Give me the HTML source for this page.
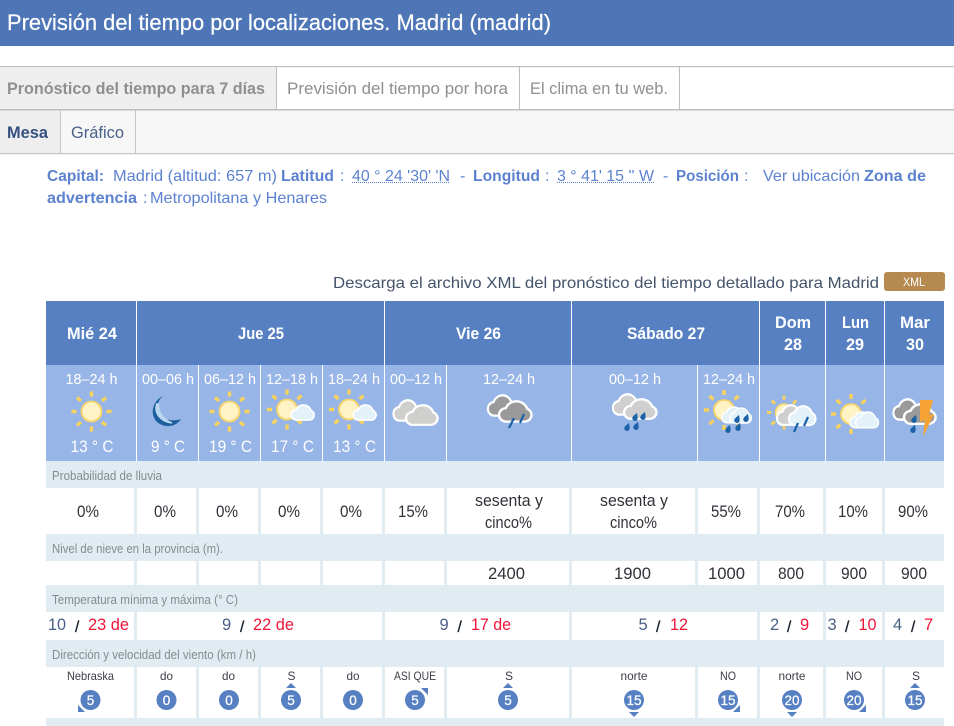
<!DOCTYPE html>
<html lang="es">
<head>
<meta charset="utf-8">
<title>Previsión del tiempo por localizaciones. Madrid (madrid)</title>
<style>
html,body{margin:0;padding:0;background:#fff;width:954px;height:726px;overflow:hidden}
svg{display:block;font-family:"Liberation Sans",Arial,sans-serif}
.t{font-size:16px;fill:#5c82cf}
.b{font-weight:bold}
.h{font-size:17px;fill:#fff;font-weight:bold;stroke:none}
.s{font-size:15px;fill:#fff}
.c{font-size:17px;fill:#fff}
.l{font-size:12.5px;fill:#858b8e}
.v{font-size:16.5px;fill:#2f3237}
.v2{font-size:15.5px;fill:#2f3237}
.n{font-size:16.5px;fill:#4a5f85}
.r{font-size:16.5px;fill:#f0143a}
.sl{font-size:15.5px;fill:#1c2430;stroke:#1c2430;stroke-width:.35}
.w{font-size:12px;fill:#3b3f45}
.k{font-size:13.5px;fill:#fff;stroke:#fff;stroke-width:.25;text-anchor:middle}
.ci{fill:#5680c2}
.ar{fill:#5680c2}
</style>
</head>
<body>
<svg xmlns="http://www.w3.org/2000/svg" width="954" height="726" viewBox="0 0 954 726">
<defs>
<g id="sun">
<g stroke="#f8d25f" stroke-width="3.4">
<path d="M0-20V-15M0 15V20M-20 0H-15M15 0H20M-14.5-14L-10.5-10.5M14.5-14L10.5-10.5M-14.5 14L-10.5 10.5M14.5 14L10.5 10.5"/>
</g>
<circle r="10" fill="#fff2c4" stroke="#f6d469" stroke-width="1.8"/>
</g>
<path id="cl" d="M6 16H19A5 5 0 0 0 20.5 6.4A8 8 0 0 0 5.5 6A5 5 0 0 0 6 16Z"/>
<path id="dr" d="M0-5.5C1.5-3 3-1 2.6 1.2A2.7 2.7 0 0 1-2.6 .4C-2.6-1.5-.8-3.5 0-5.5Z" fill="#1c62a8" transform="rotate(20)"/>
</defs>

<!-- title bar -->
<rect width="954" height="46" fill="#4e76b6"/>
<text x="7" y="30" font-size="22" fill="#fff" stroke="#fff" stroke-width=".2" textLength="544" lengthAdjust="spacingAndGlyphs">Previsión del tiempo por localizaciones. Madrid (madrid)</text>

<!-- tabs -->
<rect y="66" width="954" height="1.2" fill="#bdbdbd"/>
<rect y="67" width="276" height="42" fill="#eee"/>
<rect x="276" y="67" width="1" height="42" fill="#bdbdbd"/>
<rect x="519" y="67" width="1" height="42" fill="#bdbdbd"/>
<rect x="679" y="67" width="1" height="42" fill="#bdbdbd"/>
<rect y="109" width="954" height="1.6" fill="#bdbdbd"/>
<text x="7" y="94" font-size="17" font-weight="bold" fill="#8f8f8f" textLength="258" lengthAdjust="spacingAndGlyphs">Pronóstico del tiempo para 7 días</text>
<text x="287" y="94" font-size="17" fill="#8f8f8f" textLength="221" lengthAdjust="spacingAndGlyphs">Previsión del tiempo por hora</text>
<text x="530" y="94" font-size="17" fill="#8f8f8f" textLength="138" lengthAdjust="spacingAndGlyphs">El clima en tu web.</text>

<rect y="110.5" width="954" height="42.5" fill="#f7f7f7"/>
<rect y="110.5" width="60" height="42.5" fill="#eee"/>
<rect x="60" y="110.5" width="1" height="42.5" fill="#c4c4c4"/>
<rect x="135" y="110.5" width="1" height="42.5" fill="#c4c4c4"/>
<rect y="153" width="954" height="1.2" fill="#c4c4c4"/>
<text x="7" y="138" font-size="17" font-weight="bold" fill="#34507f" textLength="41" lengthAdjust="spacingAndGlyphs">Mesa</text>
<text x="71" y="138" font-size="17" fill="#4a628a" textLength="53" lengthAdjust="spacingAndGlyphs">Gráfico</text>

<!-- info -->
<text class="t b" x="47" y="181" textLength="57" lengthAdjust="spacingAndGlyphs">Capital:</text>
<text class="t" x="113" y="181" textLength="164" lengthAdjust="spacingAndGlyphs">Madrid (altitud: 657 m)</text>
<text class="t b" x="281" y="181" textLength="53" lengthAdjust="spacingAndGlyphs">Latitud</text>
<text class="t" x="340" y="181">:</text>
<text class="t" x="352" y="181" textLength="98" lengthAdjust="spacingAndGlyphs">40 ° 24 '30' 'N</text>
<path d="M352 182.5H450" stroke="#5c82cf" stroke-dasharray="1 1" fill="none"/>
<text class="t" x="460" y="181">-</text>
<text class="t b" x="473" y="181" textLength="67" lengthAdjust="spacingAndGlyphs">Longitud</text>
<text class="t" x="545" y="181">:</text>
<text class="t" x="557" y="181" textLength="97" lengthAdjust="spacingAndGlyphs">3 ° 41' 15 '' W</text>
<path d="M557 182.5H654" stroke="#5c82cf" stroke-dasharray="1 1" fill="none"/>
<text class="t" x="663" y="181">-</text>
<text class="t b" x="676" y="181" textLength="63" lengthAdjust="spacingAndGlyphs">Posición</text>
<text class="t" x="744" y="181">:</text>
<text class="t" x="763" y="181" textLength="97" lengthAdjust="spacingAndGlyphs">Ver ubicación</text>
<text class="t b" x="864" y="181" textLength="62" lengthAdjust="spacingAndGlyphs">Zona de</text>
<text class="t b" x="47" y="203" textLength="90" lengthAdjust="spacingAndGlyphs">advertencia</text>
<text class="t" x="143" y="203">:</text>
<text class="t" x="150" y="203" textLength="177" lengthAdjust="spacingAndGlyphs">Metropolitana y Henares</text>

<!-- xml -->
<text x="333" y="288" font-size="16" fill="#44546a" textLength="546" lengthAdjust="spacingAndGlyphs">Descarga el archivo XML del pronóstico del tiempo detallado para Madrid</text>
<rect x="884" y="272" width="61" height="19" rx="3" fill="#b5894f"/>
<text x="903" y="286" font-size="12" fill="#fff" textLength="22" lengthAdjust="spacingAndGlyphs">XML</text>

<!-- table backgrounds -->
<rect x="46" y="301" width="898" height="64" fill="#5680c2"/>
<rect x="46" y="365" width="898" height="96" fill="#97b5e6"/>
<rect x="46" y="461" width="898" height="265" fill="#e1ecf2"/>
<g fill="#fff">
<rect x="136" y="301" width="1" height="160"/><rect x="384" y="301" width="1" height="160"/><rect x="571" y="301" width="1" height="160"/><rect x="759" y="301" width="1" height="160"/><rect x="825" y="301" width="1" height="160"/><rect x="884" y="301" width="1" height="160"/>
<rect x="198" y="365" width="1" height="96"/><rect x="260" y="365" width="1" height="96"/><rect x="322" y="365" width="1" height="96"/><rect x="446" y="365" width="1" height="96"/><rect x="697" y="365" width="1" height="96"/>
<!-- rain row -->
<rect x="46" y="488" width="88" height="46"/><rect x="137" y="488" width="59" height="46"/><rect x="199" y="488" width="59" height="46"/><rect x="261" y="488" width="59" height="46"/><rect x="323" y="488" width="59" height="46"/><rect x="385" y="488" width="59" height="46"/><rect x="447" y="488" width="122" height="46"/><rect x="572" y="488" width="123" height="46"/><rect x="698" y="488" width="59" height="46"/><rect x="760" y="488" width="63" height="46"/><rect x="826" y="488" width="56" height="46"/><rect x="885" y="488" width="59" height="46"/>
<!-- snow row -->
<rect x="46" y="561" width="88" height="24"/><rect x="137" y="561" width="59" height="24"/><rect x="199" y="561" width="59" height="24"/><rect x="261" y="561" width="59" height="24"/><rect x="323" y="561" width="59" height="24"/><rect x="385" y="561" width="59" height="24"/><rect x="447" y="561" width="122" height="24"/><rect x="572" y="561" width="123" height="24"/><rect x="698" y="561" width="59" height="24"/><rect x="760" y="561" width="63" height="24"/><rect x="826" y="561" width="56" height="24"/><rect x="885" y="561" width="59" height="24"/>
<!-- temp row -->
<rect x="46" y="612" width="88" height="28"/><rect x="137" y="612" width="245" height="28"/><rect x="385" y="612" width="184" height="28"/><rect x="572" y="612" width="185" height="28"/><rect x="760" y="612" width="63" height="28"/><rect x="826" y="612" width="56" height="28"/><rect x="885" y="612" width="59" height="28"/>
<!-- wind row -->
<rect x="46" y="667" width="88" height="51"/><rect x="137" y="667" width="59" height="51"/><rect x="199" y="667" width="59" height="51"/><rect x="261" y="667" width="59" height="51"/><rect x="323" y="667" width="59" height="51"/><rect x="385" y="667" width="59" height="51"/><rect x="447" y="667" width="122" height="51"/><rect x="572" y="667" width="123" height="51"/><rect x="698" y="667" width="59" height="51"/><rect x="760" y="667" width="63" height="51"/><rect x="826" y="667" width="56" height="51"/><rect x="885" y="667" width="59" height="51"/>
</g>

<!-- header -->
<text class="h" x="67" y="339" textLength="50" lengthAdjust="spacingAndGlyphs">Mié 24</text>
<text class="h" x="238" y="339" textLength="46" lengthAdjust="spacingAndGlyphs">Jue 25</text>
<text class="h" x="456" y="339" textLength="45" lengthAdjust="spacingAndGlyphs">Vie 26</text>
<text class="h" x="627" y="339" textLength="78" lengthAdjust="spacingAndGlyphs">Sábado 27</text>
<text class="h" x="775" y="328" textLength="36" lengthAdjust="spacingAndGlyphs">Dom</text>
<text class="h" x="784" y="350" textLength="18" lengthAdjust="spacingAndGlyphs">28</text>
<text class="h" x="842" y="328" textLength="27" lengthAdjust="spacingAndGlyphs">Lun</text>
<text class="h" x="846" y="350" textLength="18" lengthAdjust="spacingAndGlyphs">29</text>
<text class="h" x="900" y="328" textLength="30" lengthAdjust="spacingAndGlyphs">Mar</text>
<text class="h" x="906" y="350" textLength="18" lengthAdjust="spacingAndGlyphs">30</text>

<!-- time labels -->
<text class="s" x="65.5" y="384" textLength="52" lengthAdjust="spacingAndGlyphs">18–24 h</text>
<text class="s" x="142" y="384" textLength="52" lengthAdjust="spacingAndGlyphs">00–06 h</text>
<text class="s" x="204" y="384" textLength="52" lengthAdjust="spacingAndGlyphs">06–12 h</text>
<text class="s" x="266" y="384" textLength="52" lengthAdjust="spacingAndGlyphs">12–18 h</text>
<text class="s" x="328" y="384" textLength="52" lengthAdjust="spacingAndGlyphs">18–24 h</text>
<text class="s" x="390" y="384" textLength="52" lengthAdjust="spacingAndGlyphs">00–12 h</text>
<text class="s" x="483" y="384" textLength="52" lengthAdjust="spacingAndGlyphs">12–24 h</text>
<text class="s" x="609" y="384" textLength="52" lengthAdjust="spacingAndGlyphs">00–12 h</text>
<text class="s" x="703" y="384" textLength="52" lengthAdjust="spacingAndGlyphs">12–24 h</text>

<!-- temps -->
<text class="c" x="70.5" y="452" textLength="43" lengthAdjust="spacingAndGlyphs">13 ° C</text>
<text class="c" x="151" y="452" textLength="34" lengthAdjust="spacingAndGlyphs">9 ° C</text>
<text class="c" x="209" y="452" textLength="43" lengthAdjust="spacingAndGlyphs">19 ° C</text>
<text class="c" x="271" y="452" textLength="43" lengthAdjust="spacingAndGlyphs">17 ° C</text>
<text class="c" x="333" y="452" textLength="43" lengthAdjust="spacingAndGlyphs">13 ° C</text>

<!-- icons -->
<use href="#sun" x="91.5" y="411.5"/>
<path d="M163 396C150 402 149 420 162 425C170 428 177 425 181 419C170 423 160 418 158 409C157 404 159 399 163 396Z" fill="#1d5f9f"/>
<path d="M156.5 404C154 413 160 421.5 172 423C163 419 158.5 413 158.5 404Z" fill="#b9d8f0" stroke="#b9d8f0" stroke-width="1.4"/>
<use href="#sun" x="229.5" y="411.5"/>
<use href="#sun" x="287" y="409.5"/>
<use href="#cl" transform="translate(290.5 404) scale(1 1)" fill="#e3f1f8" stroke="#fff" stroke-width="1.8"/>
<use href="#sun" x="349" y="409.5"/>
<use href="#cl" transform="translate(352.5 404) scale(1 1)" fill="#e3f1f8" stroke="#fff" stroke-width="1.8"/>

<use href="#cl" transform="translate(392.5 399) scale(1.18 1.35)" fill="#cfcfcd" stroke="#fff" stroke-width="1.7"/>
<use href="#cl" transform="translate(405 404) scale(1.38 1.3)" fill="#cfcfcd" stroke="#fff" stroke-width="1.7"/>

<use href="#cl" transform="translate(487 394) scale(1.2 1.35)" fill="#9a9a9a" stroke="#fff" stroke-width="1.7"/>
<use href="#cl" transform="translate(498 400) scale(1.42 1.35)" fill="#9a9a9a" stroke="#fff" stroke-width="1.7"/>
<path d="M514 418L509 428M524 414L520 423" stroke="#1c62a8" stroke-width="2.2" fill="none"/>

<use href="#cl" transform="translate(612 393) scale(1.2 1.35)" fill="#cfcfcf" stroke="#fff" stroke-width="1.7"/>
<use href="#cl" transform="translate(623 398) scale(1.42 1.3)" fill="#cfcfcf" stroke="#fff" stroke-width="1.7"/>
<use href="#dr" x="635" y="418"/><use href="#dr" x="643" y="417"/><use href="#dr" x="627" y="428"/><use href="#dr" x="636" y="427"/>

<use href="#sun" x="724" y="410"/>
<use href="#cl" transform="translate(721 406) scale(1 1.05)" fill="#e3f1f8" stroke="#fff" stroke-width="1.4"/>
<use href="#cl" transform="translate(729 407) scale(.95 1)" fill="#e3f1f8" stroke="#fff" stroke-width="1.4"/>
<use href="#dr" x="737" y="420"/><use href="#dr" x="746" y="419"/><use href="#dr" x="728" y="430"/><use href="#dr" x="738" y="428"/>

<g transform="translate(784 412.5) scale(.85)"><use href="#sun"/></g>
<use href="#cl" transform="translate(776 404) scale(1.15 1.3)" fill="#cfcfcf" stroke="#fff" stroke-width="1.7"/>
<use href="#cl" transform="translate(788 405) scale(1.17 1.25)" fill="#e3f1f8" stroke="#fff" stroke-width="1.7"/>
<path d="M798 423L794 432M808 417L804 426" stroke="#1c62a8" stroke-width="2.2" fill="none"/>

<use href="#sun" x="851" y="414"/>
<use href="#cl" transform="translate(849 411) scale(1 1.05)" fill="#e3f1f8" stroke="#fff" stroke-width="1.4"/>
<use href="#cl" transform="translate(855 411) scale(1 1.05)" fill="#e3f1f8" stroke="#fff" stroke-width="1.4"/>

<use href="#cl" transform="translate(892.5 398) scale(1.16 1.35)" fill="#9a9a9a" stroke="#fff" stroke-width="1.8"/>
<use href="#cl" transform="translate(903 403) scale(1.38 1.3)" fill="#9a9a9a" stroke="#fff" stroke-width="1.8"/>
<use href="#dr" x="914" y="420"/><use href="#dr" x="913" y="430"/>
<path d="M920 400H933L929 415L934 414L923 437L925 420L920 422Z" fill="#f5a433"/>

<!-- labels -->
<text class="l" x="52" y="480" textLength="110" lengthAdjust="spacingAndGlyphs">Probabilidad de lluvia</text>
<text class="l" x="52" y="553" textLength="171" lengthAdjust="spacingAndGlyphs">Nivel de nieve en la provincia (m).</text>
<text class="l" x="52" y="604" textLength="186" lengthAdjust="spacingAndGlyphs">Temperatura mínima y máxima (° C)</text>
<text class="l" x="52" y="659" textLength="204" lengthAdjust="spacingAndGlyphs">Dirección y velocidad del viento (km / h)</text>

<!-- rain values -->
<text class="v" x="77" y="517" textLength="22" lengthAdjust="spacingAndGlyphs">0%</text>
<text class="v" x="154" y="517" textLength="22" lengthAdjust="spacingAndGlyphs">0%</text>
<text class="v" x="216" y="517" textLength="22" lengthAdjust="spacingAndGlyphs">0%</text>
<text class="v" x="278" y="517" textLength="22" lengthAdjust="spacingAndGlyphs">0%</text>
<text class="v" x="340" y="517" textLength="22" lengthAdjust="spacingAndGlyphs">0%</text>
<text class="v" x="398" y="517" textLength="30" lengthAdjust="spacingAndGlyphs">15%</text>
<text class="v" x="475" y="506" textLength="68" lengthAdjust="spacingAndGlyphs">sesenta y</text>
<text class="v" x="485" y="528" textLength="47" lengthAdjust="spacingAndGlyphs">cinco%</text>
<text class="v" x="600" y="506" textLength="68" lengthAdjust="spacingAndGlyphs">sesenta y</text>
<text class="v" x="610" y="528" textLength="47" lengthAdjust="spacingAndGlyphs">cinco%</text>
<text class="v" x="711" y="517" textLength="30" lengthAdjust="spacingAndGlyphs">55%</text>
<text class="v" x="775" y="517" textLength="30" lengthAdjust="spacingAndGlyphs">70%</text>
<text class="v" x="838" y="517" textLength="30" lengthAdjust="spacingAndGlyphs">10%</text>
<text class="v" x="898" y="517" textLength="30" lengthAdjust="spacingAndGlyphs">90%</text>

<!-- snow -->
<text class="v" x="488" y="579" textLength="37" lengthAdjust="spacingAndGlyphs">2400</text>
<text class="v" x="614" y="579" textLength="37" lengthAdjust="spacingAndGlyphs">1900</text>
<text class="v" x="708" y="579" textLength="37" lengthAdjust="spacingAndGlyphs">1000</text>
<text class="v" x="778" y="579" textLength="26" lengthAdjust="spacingAndGlyphs">800</text>
<text class="v" x="841" y="579" textLength="26" lengthAdjust="spacingAndGlyphs">900</text>
<text class="v" x="901" y="579" textLength="26" lengthAdjust="spacingAndGlyphs">900</text>

<!-- min/max -->
<text class="n" x="48" y="630" textLength="18" lengthAdjust="spacingAndGlyphs">10</text>
<text class="sl" x="75" y="632">/</text>
<text class="r" x="88" y="630" textLength="41" lengthAdjust="spacingAndGlyphs">23 de</text>
<text class="n" x="222" y="630">9</text>
<text class="sl" x="240" y="632">/</text>
<text class="r" x="253" y="630" textLength="41" lengthAdjust="spacingAndGlyphs">22 de</text>
<text class="n" x="439.5" y="630">9</text>
<text class="sl" x="457.5" y="632">/</text>
<text class="r" x="471" y="630" textLength="40" lengthAdjust="spacingAndGlyphs">17 de</text>
<text class="n" x="638.5" y="630">5</text>
<text class="sl" x="656" y="632">/</text>
<text class="r" x="670" y="630" textLength="18" lengthAdjust="spacingAndGlyphs">12</text>
<text class="n" x="770" y="630">2</text>
<text class="sl" x="787" y="632">/</text>
<text class="r" x="800" y="630">9</text>
<text class="n" x="827.5" y="630">3</text>
<text class="sl" x="845" y="632">/</text>
<text class="r" x="858.5" y="630" textLength="18" lengthAdjust="spacingAndGlyphs">10</text>
<text class="n" x="893" y="630">4</text>
<text class="sl" x="911" y="632">/</text>
<text class="r" x="924" y="630">7</text>

<!-- wind labels -->
<text class="w" x="67" y="680" textLength="47" lengthAdjust="spacingAndGlyphs">Nebraska</text>
<text class="w" x="160" y="680" textLength="13" lengthAdjust="spacingAndGlyphs">do</text>
<text class="w" x="222" y="680" textLength="13" lengthAdjust="spacingAndGlyphs">do</text>
<text class="w" x="287.5" y="680">S</text>
<text class="w" x="346.5" y="680" textLength="13" lengthAdjust="spacingAndGlyphs">do</text>
<text class="w" x="394" y="680" textLength="42" lengthAdjust="spacingAndGlyphs">ASI QUE</text>
<text class="w" x="505" y="680">S</text>
<text class="w" x="620.5" y="680" textLength="27" lengthAdjust="spacingAndGlyphs">norte</text>
<text class="w" x="720" y="680" textLength="16" lengthAdjust="spacingAndGlyphs">NO</text>
<text class="w" x="778.5" y="680" textLength="27" lengthAdjust="spacingAndGlyphs">norte</text>
<text class="w" x="846" y="680" textLength="16" lengthAdjust="spacingAndGlyphs">NO</text>
<text class="w" x="912" y="680">S</text>

<!-- wind circles -->
<circle class="ci" cx="90.5" cy="700" r="10"/><text class="k" x="90.5" y="705">5</text>
<circle class="ci" cx="166.5" cy="700" r="10"/><text class="k" x="166.5" y="705">0</text>
<circle class="ci" cx="229" cy="700" r="10"/><text class="k" x="229" y="705">0</text>
<circle class="ci" cx="291" cy="700" r="10"/><text class="k" x="291" y="705">5</text>
<circle class="ci" cx="353" cy="700" r="10"/><text class="k" x="353" y="705">0</text>
<circle class="ci" cx="415" cy="700" r="10"/><text class="k" x="415" y="705">5</text>
<circle class="ci" cx="508" cy="700" r="10"/><text class="k" x="508" y="705">5</text>
<circle class="ci" cx="634" cy="700" r="10"/><text class="k" x="634" y="705">15</text>
<circle class="ci" cx="728" cy="700" r="10"/><text class="k" x="728" y="705">15</text>
<circle class="ci" cx="792" cy="700" r="10"/><text class="k" x="792" y="705">20</text>
<circle class="ci" cx="854" cy="700" r="10"/><text class="k" x="854" y="705">20</text>
<circle class="ci" cx="915" cy="700" r="10"/><text class="k" x="915" y="705">15</text>

<!-- wind arrows -->
<g class="ar">
<path d="M78 712V705L85 712Z"/>
<path d="M286 688L291 683L296 688Z"/>
<path d="M421 688H428V695Z"/>
<path d="M503 688L508 683L513 688Z"/>
<path d="M629 712H639L634 717Z"/>
<path d="M740 705V712H733Z"/>
<path d="M787 712H797L792 717Z"/>
<path d="M866 705V712H859Z"/>
<path d="M910 688L915 683L920 688Z"/>
</g>
</svg>
</body>
</html>
